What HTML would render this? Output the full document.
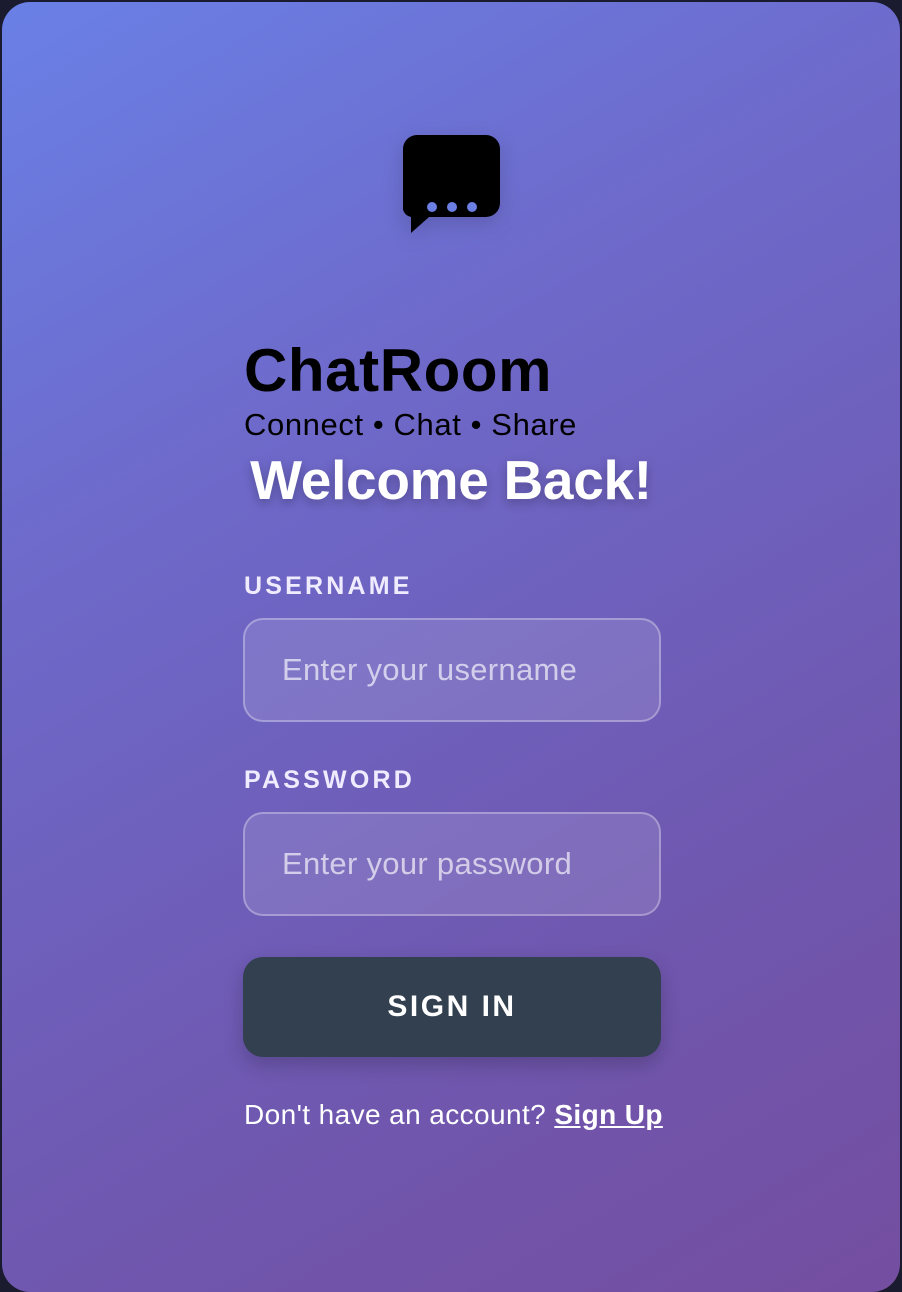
<!DOCTYPE html>
<html><head><style>
html,body{margin:0;padding:0;width:902px;height:1292px;background:#1a1b2e;overflow:hidden}
.card{position:absolute;left:2px;top:2px;width:898px;height:1290px;border-radius:28px;background:linear-gradient(150deg,#6a80e6 0%,#6e68c8 35%,#6f58b0 70%,#744ea0 100%);font-family:"Liberation Sans",sans-serif}
.icon{position:absolute;left:401px;top:133px;filter:drop-shadow(0 6px 10px rgba(0,0,0,.15))}
.t1{position:absolute;left:242px;top:334px;font-size:60px;font-weight:bold;color:#000;letter-spacing:0.6px}
.t2{position:absolute;left:242px;top:405px;font-size:31px;color:#000;letter-spacing:0.6px}
.t3{position:absolute;left:0;width:898px;text-align:center;top:446px;font-size:55px;font-weight:bold;color:#fff;text-shadow:0 4px 10px rgba(0,0,0,.25);letter-spacing:-0.3px}
.lab{position:absolute;left:242px;font-size:25px;font-weight:bold;color:#f0ecff;letter-spacing:3.2px}
.inp{position:absolute;left:241px;width:414px;height:100px;border:2px solid rgba(255,255,255,.3);border-radius:20px;background:rgba(255,255,255,.12);box-sizing:content-box}
.inp span{position:absolute;left:37px;top:32px;font-size:31px;color:rgba(255,255,255,.65);letter-spacing:0.3px}
.btn{position:absolute;left:241px;top:955px;width:418px;height:100px;border-radius:20px;background:#334050;box-shadow:0 8px 20px rgba(0,0,0,.2);color:#fff;font-size:30px;font-weight:bold;letter-spacing:2.5px;text-align:center;line-height:100px}
.foot{position:absolute;left:242px;top:1097px;font-size:28px;color:#fff;letter-spacing:0.4px}
.foot b{text-decoration:underline}
</style></head><body>
<div class="card">
<svg class="icon" width="97" height="100" viewBox="0 0 97 100">
<path d="M14 0H83A14 14 0 0 1 97 14V68A14 14 0 0 1 83 82H26L8 98V82A10 10 0 0 1 0 70V14A14 14 0 0 1 14 0Z" fill="#000"/>
<circle cx="29" cy="72" r="5" fill="#6b7fe4"/><circle cx="49" cy="72" r="5" fill="#6b7fe4"/><circle cx="69" cy="72" r="5" fill="#6b7fe4"/>
</svg>
<div class="t1">ChatRoom</div>
<div class="t2">Connect • Chat • Share</div>
<div class="t3">Welcome Back!</div>
<div class="lab" style="top:570px">USERNAME</div>
<div class="inp" style="top:616px"><span>Enter your username</span></div>
<div class="lab" style="top:764px">PASSWORD</div>
<div class="inp" style="top:810px"><span>Enter your password</span></div>
<div class="btn">SIGN IN</div>
<div class="foot">Don't have an account? <b>Sign Up</b></div>
</div>
</body></html>
